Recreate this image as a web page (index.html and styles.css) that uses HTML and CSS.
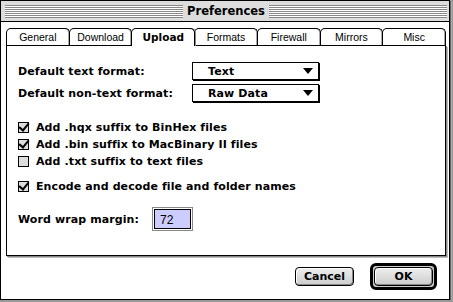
FILE: index.html
```html
<!DOCTYPE html>
<html lang="en">
<head>
  <meta charset="UTF-8" />
  <title>Preferences</title>
  <link rel="stylesheet" href="styles.css">
</head>
<body>
  <div class="window">
    <div class="titlebar">
      <div class="stripes"></div>
      <div class="title">Preferences</div>
      <div class="stripes"></div>
    </div>

    <div class="tabs">
      <div class="tab">General</div>
      <div class="tab">Download</div>
      <div class="tab active">Upload</div>
      <div class="tab">Formats</div>
      <div class="tab">Firewall</div>
      <div class="tab">Mirrors</div>
      <div class="tab">Misc</div>
    </div>

    <div class="pane">
      <div class="field-row">
        <span class="label">Default text format:</span>
        <div class="popup"><span>Text</span><span class="arrow"></span></div>
      </div>
      <div class="field-row">
        <span class="label">Default non-text format:</span>
        <div class="popup"><span>Raw Data</span><span class="arrow"></span></div>
      </div>

      <div class="checks">
        <label class="check"><span class="box checked"></span>Add .hqx suffix to BinHex files</label>
        <label class="check"><span class="box checked"></span>Add .bin suffix to MacBinary II files</label>
        <label class="check"><span class="box"></span>Add .txt suffix to text files</label>
      </div>
      <label class="check encode"><span class="box checked"></span>Encode and decode file and folder names</label>

      <div class="wrap-row">
        <span class="label">Word wrap margin:</span>
        <span class="textbox">72</span>
      </div>
    </div>

    <div class="buttons">
      <button class="btn">Cancel</button>
      <div class="default-ring"><button class="btn">OK</button></div>
    </div>
  </div>
</body>
</html>
```

FILE: styles.css
```css
body {
  margin: 0;
  background: #999;
  font-family: "DejaVu Sans", Verdana, sans-serif;
  font-weight: bold;
  font-size: 11px;
  letter-spacing: 0.1px;
  color: #000;
}

.window {
  box-sizing: border-box;
  width: 450px;
  height: 300px;
  border: 1px solid #000;
  background: #fff;
  box-shadow: 1px 1px 0 #666, 2px 2px 0 #aaa;
}

.titlebar {
  height: 20px;
  background: #ddd;
  border-bottom: 1px solid #000;
  display: flex;
  align-items: center;
  padding: 0 2px 0 4px;
}

.stripes {
  flex: 1;
  height: 13px;
  background: repeating-linear-gradient(#888 0 1px, #fff 1px 2px);
}

.title {
  padding: 0 4px;
  font-size: 11.5px;
  letter-spacing: 0;
}

.tabs {
  display: flex;
  margin: 6px 0 0 5px;
  width: 439px;
  height: 17px;
}

.tab {
  flex: 1;
  box-sizing: border-box;
  border: 1px solid #000;
  border-bottom: none;
  border-radius: 5px 5px 0 0;
  margin-right: -1px;
  background: #fff;
  font-family: "Liberation Sans", Arial, sans-serif;
  font-weight: normal;
  font-size: 10.5px;
  letter-spacing: 0;
  text-align: center;
  line-height: 16px;
  box-shadow: inset -1px 0 0 #aaa;
}

.tab.active {
  font-family: "DejaVu Sans", sans-serif;
  font-weight: bold;
  font-size: 10.5px;
  position: relative;
  z-index: 1;
  height: 18px;
  box-shadow: 1px 0 0 #888;
}

.pane {
  box-sizing: border-box;
  margin-left: 5px;
  width: 440px;
  height: 211px;
  border: 1px solid #000;
  box-shadow: 1px 1px 0 #888, 2px 2px 0 #bbb;
  padding: 16px 0 0 11px;
}

.field-row {
  display: flex;
  align-items: center;
  height: 18px;
  margin-bottom: 4px;
}

.label {
  width: 174px;
}

.wrap-row .label {
  width: 136px;
}

.popup {
  box-sizing: border-box;
  width: 127px;
  height: 18px;
  border: 1px solid #000;
  box-shadow: 1px 1px 0 #000;
  display: flex;
  align-items: center;
  justify-content: space-between;
  padding: 0 5px 0 15px;
}

.arrow {
  width: 0;
  height: 0;
  border-left: 5px solid transparent;
  border-right: 5px solid transparent;
  border-top: 6px solid #000;
}

.checks {
  margin-top: 17px;
}

.check {
  display: flex;
  align-items: center;
  height: 17px;
}

.encode {
  margin-top: 8px;
}

.box {
  box-sizing: border-box;
  width: 11px;
  height: 11px;
  border: 1px solid #000;
  background: #ddd;
  margin-right: 7px;
  position: relative;
}

.box.checked::after {
  content: "";
  position: absolute;
  left: 2px;
  top: -2px;
  width: 4px;
  height: 8px;
  border-right: 2px solid #000;
  border-bottom: 2px solid #000;
  transform: rotate(40deg);
}

.wrap-row {
  display: flex;
  align-items: center;
  margin-top: 14px;
}

.textbox {
  box-sizing: border-box;
  width: 37px;
  height: 20px;
  border: 1px solid #000;
  outline: 1px solid #888;
  outline-offset: 1px;
  background: #ccf;
  padding: 3px 0 0 5px;
  font-family: "Liberation Sans", Arial, sans-serif;
  font-weight: normal;
  font-size: 12px;
}

.buttons {
  display: flex;
  justify-content: flex-end;
  align-items: center;
  gap: 16px;
  padding: 7px 12px 0 0;
}

.btn {
  box-sizing: border-box;
  height: 19px;
  width: 59px;
  border: 1px solid #000;
  border-radius: 4px;
  background: linear-gradient(#eee, #ccc);
  box-shadow: inset -1px -1px 0 #888, inset 1px 1px 0 #fff;
  font-family: "DejaVu Sans", sans-serif;
  font-weight: bold;
  font-size: 11px;
  padding: 0;
  color: #000;
}

.default-ring {
  border: 3px solid #000;
  border-radius: 6px;
  padding: 1px;
  background: #ccc;
  display: flex;
}
```
